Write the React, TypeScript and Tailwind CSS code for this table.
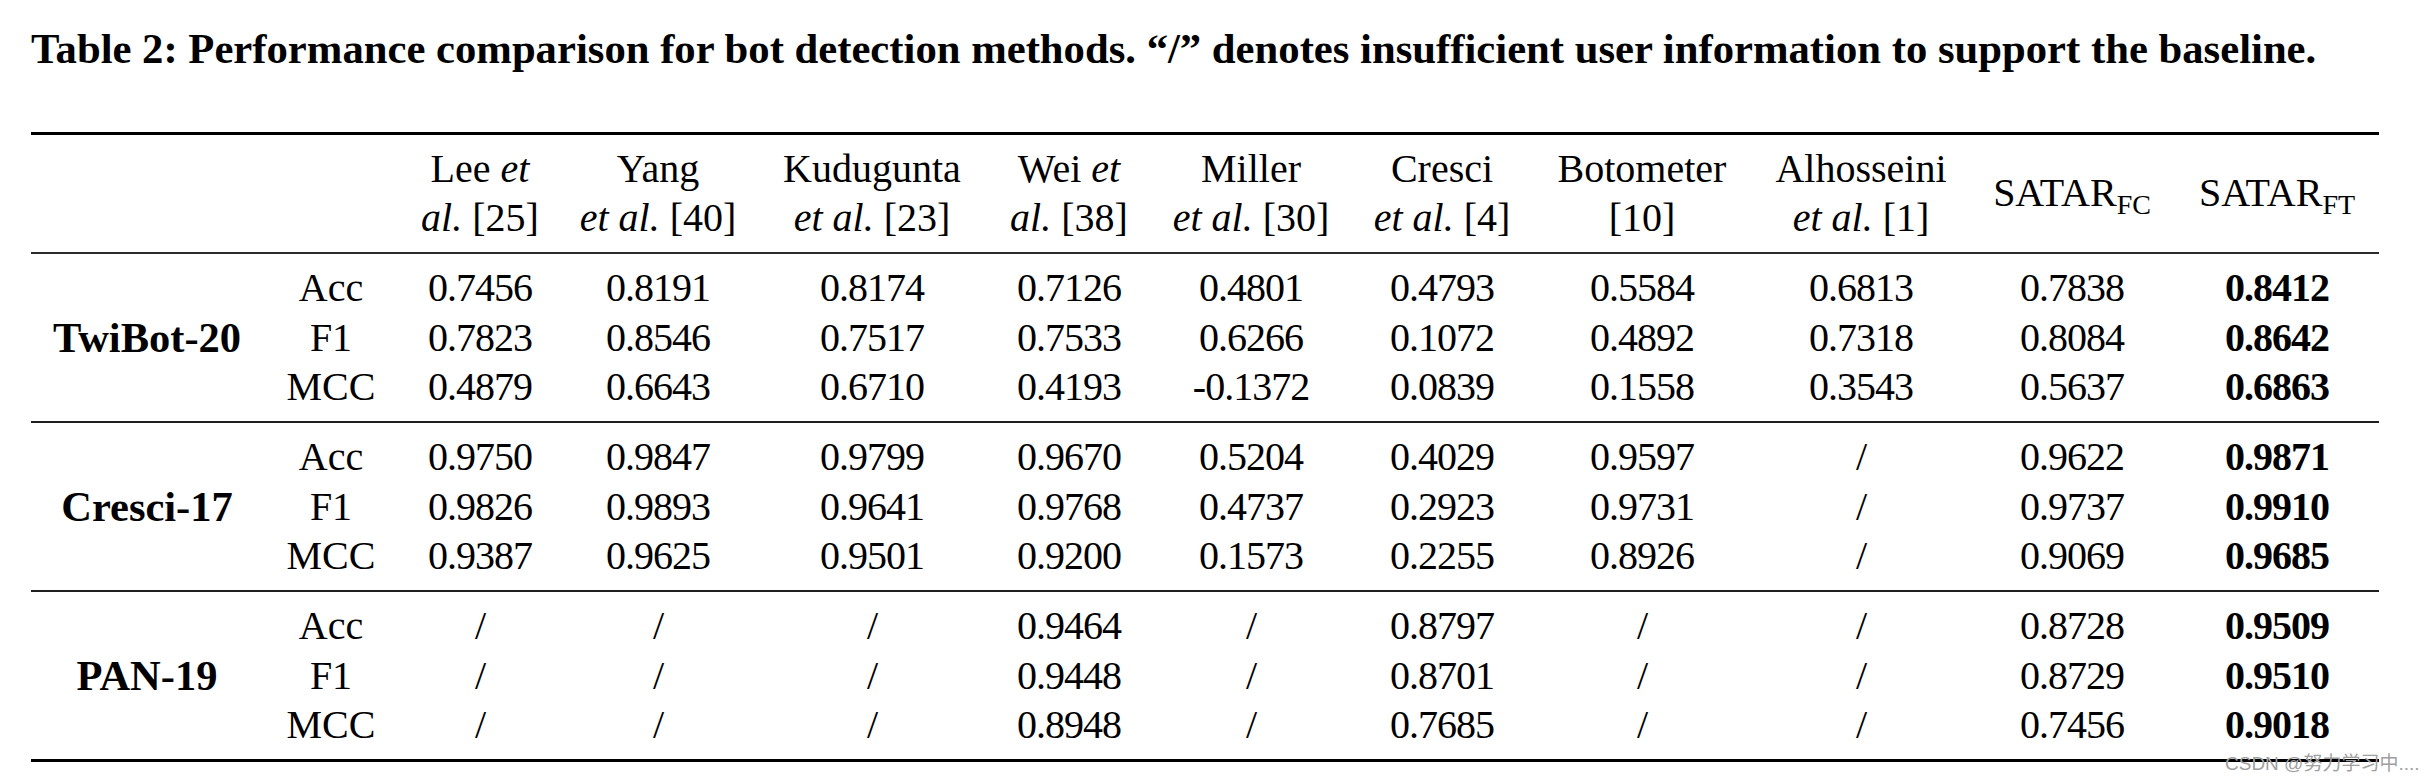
import React from "react";

const methods: { l1: React.ReactNode; l2?: React.ReactNode }[] = [
  { l1: <>Lee <i>et</i></>, l2: <><i>al.</i> [25]</> },
  { l1: <>Yang</>, l2: <><i>et al.</i> [40]</> },
  { l1: <>Kudugunta</>, l2: <><i>et al.</i> [23]</> },
  { l1: <>Wei <i>et</i></>, l2: <><i>al.</i> [38]</> },
  { l1: <>Miller</>, l2: <><i>et al.</i> [30]</> },
  { l1: <>Cresci</>, l2: <><i>et al.</i> [4]</> },
  { l1: <>Botometer</>, l2: <>[10]</> },
  { l1: <>Alhosseini</>, l2: <><i>et al.</i> [1]</> },
];

const groups: { name: string; rows: { m: string; v: string[] }[] }[] = [
  {
    name: "TwiBot-20",
    rows: [
      { m: "Acc", v: ["0.7456", "0.8191", "0.8174", "0.7126", "0.4801", "0.4793", "0.5584", "0.6813", "0.7838", "0.8412"] },
      { m: "F1", v: ["0.7823", "0.8546", "0.7517", "0.7533", "0.6266", "0.1072", "0.4892", "0.7318", "0.8084", "0.8642"] },
      { m: "MCC", v: ["0.4879", "0.6643", "0.6710", "0.4193", "-0.1372", "0.0839", "0.1558", "0.3543", "0.5637", "0.6863"] },
    ],
  },
  {
    name: "Cresci-17",
    rows: [
      { m: "Acc", v: ["0.9750", "0.9847", "0.9799", "0.9670", "0.5204", "0.4029", "0.9597", "/", "0.9622", "0.9871"] },
      { m: "F1", v: ["0.9826", "0.9893", "0.9641", "0.9768", "0.4737", "0.2923", "0.9731", "/", "0.9737", "0.9910"] },
      { m: "MCC", v: ["0.9387", "0.9625", "0.9501", "0.9200", "0.1573", "0.2255", "0.8926", "/", "0.9069", "0.9685"] },
    ],
  },
  {
    name: "PAN-19",
    rows: [
      { m: "Acc", v: ["/", "/", "/", "0.9464", "/", "0.8797", "/", "/", "0.8728", "0.9509"] },
      { m: "F1", v: ["/", "/", "/", "0.9448", "/", "0.8701", "/", "/", "0.8729", "0.9510"] },
      { m: "MCC", v: ["/", "/", "/", "0.8948", "/", "0.7685", "/", "/", "0.7456", "0.9018"] },
    ],
  },
];

const gridCols =
  "grid grid-cols-[232px_136px_162px_194px_234px_160px_204px_178px_222px_216px_206px_204px]";

function Satar({ sub }: { sub: string }) {
  return (
    <div className="row-span-2 flex items-center justify-center pt-[2px]">
      <span className="leading-[49px]">
        SATAR
        <span className="relative top-[8px] text-[28px]">{sub}</span>
      </span>
    </div>
  );
}

export default function App() {
  return (
    <div className="relative w-[2434px] h-[784px] bg-white text-black font-['Liberation_Serif','Times_New_Roman',serif] overflow-hidden">
      <div className="pl-[31px] pt-[25px] h-[132px]">
        <div className="text-[42.7px] font-bold leading-[48px] whitespace-nowrap">
          Table 2: Performance comparison for bot detection methods. “/” denotes insufficient user information to
          support the baseline.
        </div>
      </div>

      <div className="ml-[31px] w-[2348px] text-[40px]">
        <div className="h-[3px] bg-black" />

        <div className={`${gridCols} grid-rows-[49px_49px] pt-[9px] pb-[10px]`}>
          <div className="row-span-2" />
          <div className="row-span-2" />
          {methods.map((m, i) => (
            <div key={i} className="row-span-2 flex flex-col items-center">
              <div className="leading-[49px] whitespace-nowrap">{m.l1}</div>
              <div className="leading-[49px] whitespace-nowrap">{m.l2}</div>
            </div>
          ))}
          <Satar sub="FC" />
          <Satar sub="FT" />
        </div>

        {groups.map((g, gi) => (
          <div key={g.name}>
            <div className={gi === 0 ? "h-[2px] bg-[#2b2b2b]" : "h-[2px] bg-[#1f1f1f]"} />
            <div className={`${gridCols} grid-rows-[49.5px_49.5px_49.5px] pt-[9px] pb-[9.5px]`}>
              <div className="row-span-3 col-start-1 row-start-1 flex items-center justify-center font-bold text-[42.5px] leading-[49px]">
                {g.name}
              </div>
              {g.rows.map((r, ri) => (
                <React.Fragment key={r.m}>
                  <div
                    className={`col-start-2 flex items-center justify-center leading-[49px] ${
                      ri === 0 ? "row-start-1" : ri === 1 ? "row-start-2" : "row-start-3"
                    }`}
                  >
                    {r.m}
                  </div>
                  {r.v.map((v, vi) => (
                    <div
                      key={vi}
                      className={`flex items-center justify-center leading-[49px] tracking-[-1px] ${
                        vi === r.v.length - 1 ? "font-bold" : ""
                      }`}
                    >
                      {v}
                    </div>
                  ))}
                </React.Fragment>
              ))}
            </div>
          </div>
        ))}
        <div className="h-[3px] bg-black" />
      </div>

      <div className="absolute left-[2225px] top-[752px] text-[19px] leading-[24px] text-[#a0a0a0] font-['Liberation_Sans','Noto_Sans_CJK_SC',sans-serif] whitespace-nowrap">
        CSDN @努力学习中....
      </div>
    </div>
  );
}
